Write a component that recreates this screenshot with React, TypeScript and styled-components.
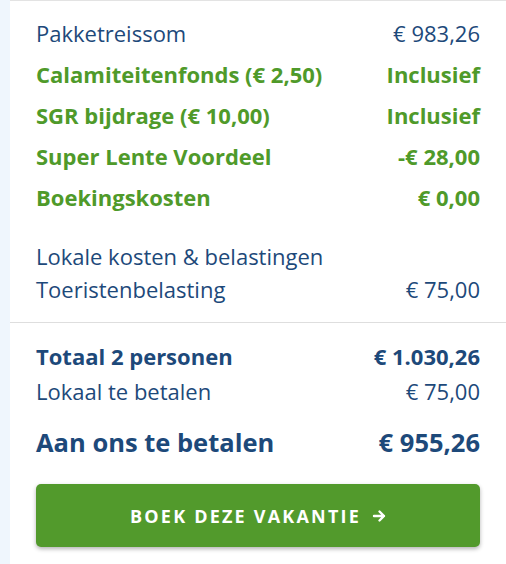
import styled, { createGlobalStyle } from "styled-components";

const GlobalStyle = createGlobalStyle`
  html, body {
    margin: 0;
    padding: 0;
    background: #eff6fd;
    font-family: "Open Sans", "Liberation Sans", sans-serif;
  }
`;

const Panel = styled.div`
  margin-left: 10px;
  min-height: 564px;
  box-sizing: border-box;
  background: #fff;
  border-top: 1px solid #e3e3e3;
  padding-top: 11px;
`;

const Section = styled.div<{ $gap?: number }>`
  padding: 0 26px;
  margin-top: ${(p) => p.$gap ?? 0}px;
`;

const Row = styled.div<{ $h: number; $tone?: "navy" | "green"; $bold?: boolean; $size?: number; $gap?: number }>`
  display: flex;
  justify-content: space-between;
  align-items: center;
  height: ${(p) => p.$h}px;
  margin-top: ${(p) => p.$gap ?? 0}px;
  font-size: ${(p) => p.$size ?? 22}px;
  font-weight: ${(p) => (p.$bold ? 700 : 400)};
  color: ${(p) => (p.$tone === "green" ? "#4f9a2a" : "#1d497a")};
  white-space: nowrap;
`;

const Divider = styled.hr`
  border: 0;
  border-top: 1px solid #dedede;
  margin: 17px 0 0;
`;

const BookButton = styled.button`
  display: flex;
  align-items: center;
  justify-content: center;
  gap: 11px;
  width: 100%;
  height: 63px;
  margin-top: 18px;
  border: 0;
  border-radius: 5px;
  background: #529a2c;
  box-shadow: 0 2px 4px rgba(0, 0, 0, 0.3);
  color: #fff;
  font-family: inherit;
  font-size: 18px;
  font-weight: 700;
  letter-spacing: 2.2px;
  cursor: pointer;
`;

const Arrow = () => (
  <svg width="14" height="14" viewBox="0 0 14 14" fill="none" stroke="#fff" strokeWidth="2.4" strokeLinecap="round" strokeLinejoin="round">
    <path d="M2 7h10M7.5 2.5 12 7l-4.5 4.5" />
  </svg>
);

const items = [
  { label: "Pakketreissom", value: "€ 983,26", green: false },
  { label: "Calamiteitenfonds (€ 2,50)", value: "Inclusief", green: true },
  { label: "SGR bijdrage (€ 10,00)", value: "Inclusief", green: true },
  { label: "Super Lente Voordeel", value: "-€ 28,00", green: true },
  { label: "Boekingskosten", value: "€ 0,00", green: true },
];

export default function App() {
  return (
    <>
      <GlobalStyle />
      <Panel>
        <Section>
          {items.map((it) => (
            <Row key={it.label} $h={41} $tone={it.green ? "green" : "navy"} $bold={it.green}>
              <span>{it.label}</span>
              <span>{it.value}</span>
            </Row>
          ))}
        </Section>
        <Section $gap={22}>
          <Row $h={33}>
            <span>Lokale kosten &amp; belastingen</span>
          </Row>
          <Row $h={33}>
            <span>Toeristenbelasting</span>
            <span>€ 75,00</span>
          </Row>
        </Section>
        <Divider />
        <Section $gap={15}>
          <Row $h={35} $bold>
            <span>Totaal 2 personen</span>
            <span>€ 1.030,26</span>
          </Row>
          <Row $h={35}>
            <span>Lokaal te betalen</span>
            <span>€ 75,00</span>
          </Row>
          <Row $h={48} $gap={10} $bold $size={25.5}>
            <span>Aan ons te betalen</span>
            <span>€ 955,26</span>
          </Row>
          <BookButton>
            BOEK DEZE VAKANTIE <Arrow />
          </BookButton>
        </Section>
      </Panel>
    </>
  );
}
